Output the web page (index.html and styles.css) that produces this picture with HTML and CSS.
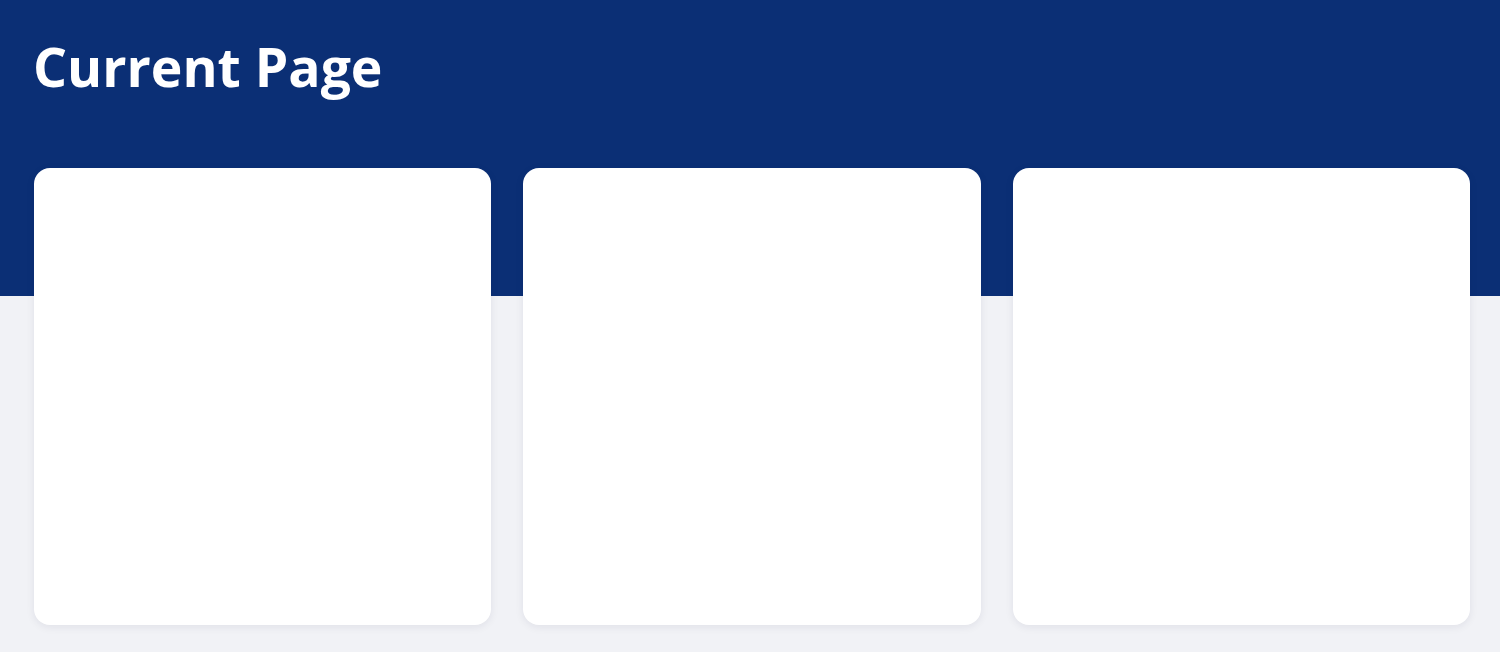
FILE: index.html
```html
<!DOCTYPE html>
<html>
<head>
<meta charset="utf-8">
<link rel="stylesheet" href="styles.css">
</head>
<body>
<div class="hero">
  <h1 class="title">Current Page</h1>
</div>
<main class="cards">
  <div class="card"></div>
  <div class="card"></div>
  <div class="card"></div>
</main>
</body>
</html>
```
FILE: styles.css
```css
html, body {
  margin: 0;
  padding: 0;
}
body {
  background: #f1f2f6;
  font-family: "Open Sans", "Noto Sans", sans-serif;
  height: 652px;
  overflow: hidden;
}
.hero {
  background: #0b2f75;
  height: 296px;
  box-sizing: border-box;
  padding: 30px 33px 0;
}
.title {
  margin: 0;
  color: #ffffff;
  font-size: 53.5px;
  font-weight: 700;
  line-height: 74px;
  letter-spacing: 0;
}
.cards {
  display: grid;
  grid-template-columns: 1fr 1fr 1fr;
  gap: 32px;
  padding: 0 30px 0 34px;
  margin-top: -128px;
}
.card {
  background: #ffffff;
  aspect-ratio: 1 / 1;
  border-radius: 16px;
  box-shadow: 0 2px 8px rgba(20, 30, 70, 0.08);
}
```
